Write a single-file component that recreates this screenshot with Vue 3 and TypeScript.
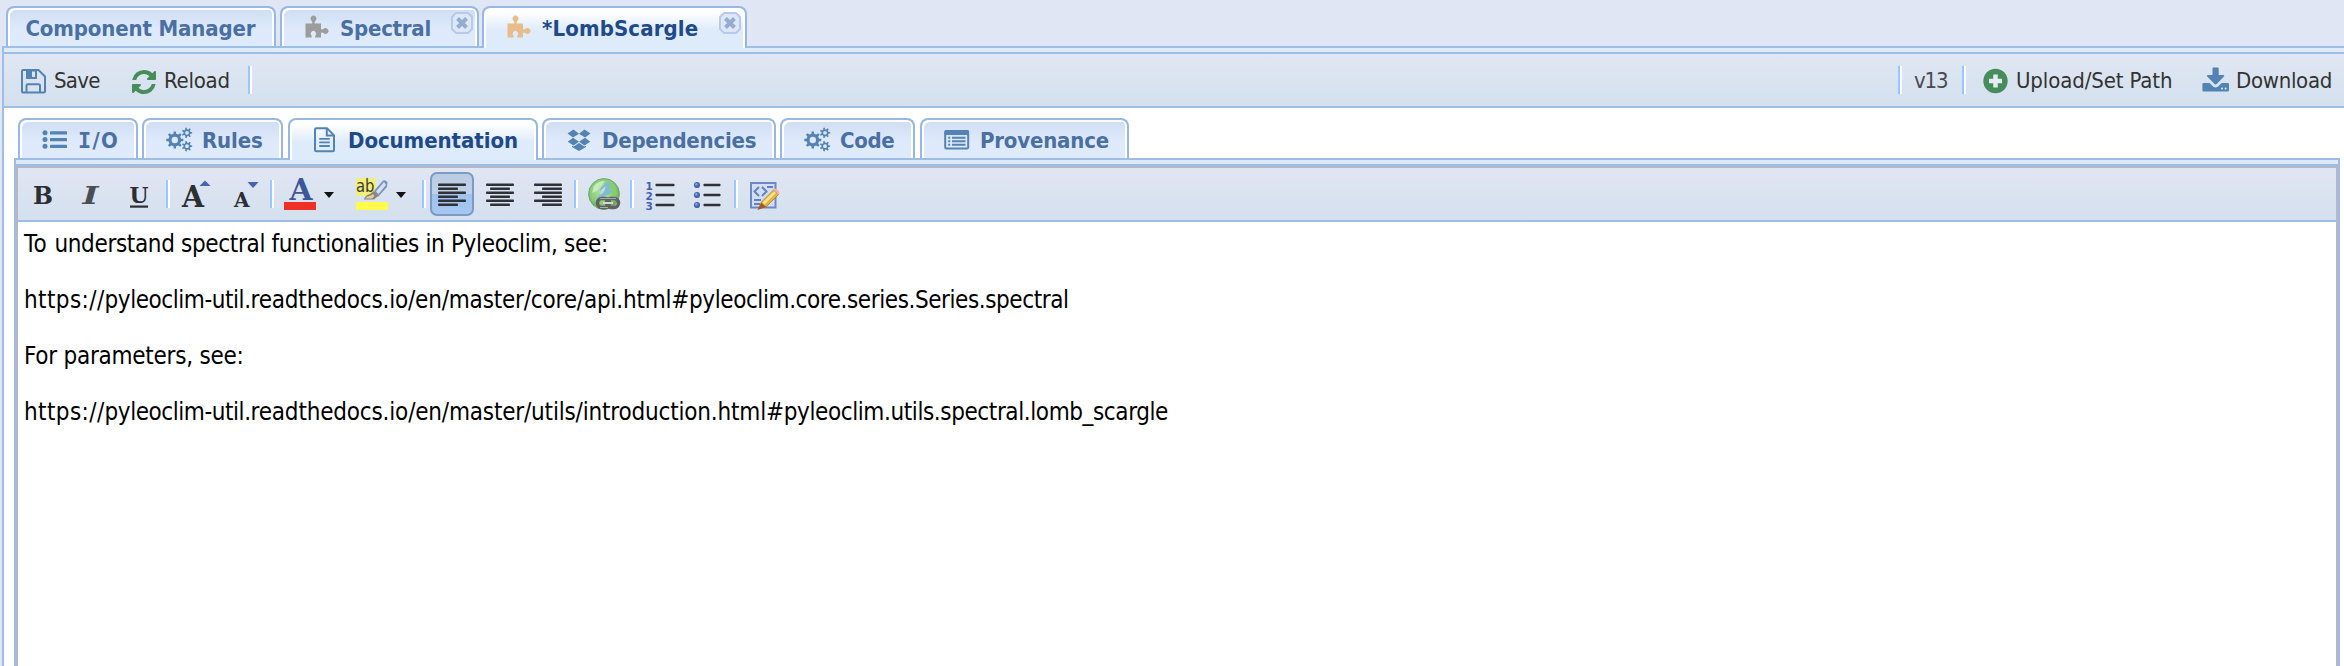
<script setup lang="ts">
type IconName = 'puzzle' | 'list' | 'cogs' | 'file' | 'dropbox' | 'listalt'

interface Tab {
  label: string
  width: number
  gap: number
  spacing: number
  icon?: IconName
  tint?: 'grey' | 'orange'
  closable?: boolean
  active?: boolean
}

const mainTabs: Tab[] = [
  { label: 'Component Manager', width: 270, gap: 4, spacing: -0.15 },
  { label: 'Spectral', width: 199, gap: 3, spacing: -0.24, icon: 'puzzle', tint: 'grey', closable: true },
  { label: '*LombScargle', width: 265, gap: 0, spacing: 0.12, icon: 'puzzle', tint: 'orange', closable: true, active: true },
]

const subTabs: Tab[] = [
  { label: 'I/O', width: 120, gap: 4, spacing: 1.2, icon: 'list' },
  { label: 'Rules', width: 141, gap: 5, spacing: -0.14, icon: 'cogs' },
  { label: 'Documentation', width: 250, gap: 4, spacing: -0.06, icon: 'file', active: true },
  { label: 'Dependencies', width: 234, gap: 4, spacing: -0.23, icon: 'dropbox' },
  { label: 'Code', width: 135, gap: 5, spacing: -0.33, icon: 'cogs' },
  { label: 'Provenance', width: 209, gap: 0, spacing: -0.2, icon: 'listalt' },
]

// Each paragraph is a run of segments with their own tracking.
const paragraphs: { text: string; spacing: number }[][] = [
  [
    { text: 'To ', spacing: 0.4 },
    { text: 'understand spectral functionalities in Pyleoclim, see:', spacing: -0.34 },
  ],
  [
    { text: 'https://', spacing: 0.4 },
    { text: 'pyleoclim-util.', spacing: -0.45 },
    { text: 'readthedocs.io/en/master/core/api.html', spacing: -0.19 },
    { text: '#pyleoclim.core.series.Series.spectral', spacing: -0.42 },
  ],
  [{ text: 'For parameters, see:', spacing: -0.25 }],
  [
    { text: 'https://', spacing: 0.4 },
    { text: 'pyleoclim-util.', spacing: -0.45 },
    { text: 'readthedocs.io/en/master/utils/introduction.html', spacing: -0.18 },
    { text: '#pyleoclim.utils.spectral.lomb_scargle', spacing: -0.4 },
  ],
]

// Outline of a gear: square teeth around a disc, with a round hole.
function gear(cx: number, cy: number, outer: number, inner: number, hole: number, teeth: number): string {
  const step = (Math.PI * 2) / teeth
  const pts: string[] = []
  for (let i = 0; i < teeth; i++) {
    const a = i * step
    const corners: [number, number][] = [[-0.27, inner], [-0.17, outer], [0.17, outer], [0.27, inner]]
    for (const [o, r] of corners) {
      pts.push(`${(cx + Math.cos(a + o * step) * r).toFixed(2)} ${(cy + Math.sin(a + o * step) * r).toFixed(2)}`)
    }
  }
  return `M${pts.join('L')}ZM${cx - hole} ${cy}a${hole} ${hole} 0 1 0 ${hole * 2} 0a${hole} ${hole} 0 1 0 ${-hole * 2} 0Z`
}

const cogs = gear(8.8, 13, 8.6, 6.4, 3.2, 8) + gear(21, 5.8, 5.2, 3.6, 1.9, 7) + gear(21, 19.2, 5.2, 3.6, 1.9, 7)

const alignRows = [0, 1, 2, 3, 4, 5]
const aligns = [
  { name: 'left', inset: 0, active: true },
  { name: 'center', inset: 4, active: false },
  { name: 'right', inset: 8, active: false },
]
</script>

<template>
  <div class="app">
    <nav class="strip main-strip">
      <div
        v-for="t in mainTabs"
        :key="t.label"
        class="tab"
        :class="{ active: t.active }"
        :style="{ width: t.width + 'px', marginRight: t.gap + 'px' }"
      >
        <svg v-if="t.icon" class="tab-icon" :class="t.tint" viewBox="0 0 28 26">
          <path d="M1.5 8.4H7.6C8.6 8.4 8.6 7 8 6.2A3 3 0 1 1 11 6.2C10.4 7 10.4 8.4 11.4 8.4H17V13.2C17 14.6 18.4 14.8 19.4 14A2.9 2.9 0 1 1 19.4 18C18.4 17.2 17 17.4 17 18.8V22.6H11.8C10.8 22.6 10.9 21.2 11.5 20.4A2.7 2.7 0 1 0 7.3 20.4C7.9 21.2 8 22.6 7 22.6H1.5Z" />
        </svg>
        <span class="tab-label" :style="{ letterSpacing: t.spacing + 'px' }">{{ t.label }}</span>
        <svg v-if="t.closable" class="close" viewBox="0 0 22 22">
          <path class="close-box" d="M5 1H17L21 5V17L17 21H5L1 17V5Z" />
          <path class="close-x" d="M6.5 6.5L15.5 15.5M15.5 6.5L6.5 15.5" />
        </svg>
      </div>
    </nav>

    <div class="window">
      <div class="band"></div>
      <div class="toolbar">
        <div class="btn save">
          <svg viewBox="0 0 26 26" class="ic26">
            <path class="line" d="M3 2H18.5L25 8.5V23Q25 24.5 23.5 24.5H3Q2 24.5 2 23.5V3Q2 2 3 2Z" />
            <path class="line" d="M6.5 24V17.5Q6.5 16.2 7.8 16.2H18.7Q20 16.2 20 17.5V24" />
            <path class="solid" fill-rule="evenodd" d="M6 2H17V11H6ZM12 3.5V9H15V3.5Z" />
          </svg>
          <span class="t-save">Save</span>
        </div>
        <div class="btn reload">
          <svg viewBox="0 0 1536 1536" class="ic24 green">
            <path d="M1511 928q0 5-1 7-64 268-268 434.500t-478 166.500q-146 0-282.500-55t-243.500-157l-129 129q-19 19-45 19t-45-19-19-45v-448q0-26 19-45t45-19h448q26 0 45 19t19 45-19 45l-137 137q71 66 161 102t187 36q134 0 250-65t186-179q11-17 53-117 8-23 30-23h192q13 0 22.500 9.500t9.500 22.500zm25-800v448q0 26-19 45t-45 19h-448q-26 0-45-19t-19-45 19-45l138-138q-148-137-349-137-134 0-250 65t-186 179q-11 17-53 117-8 23-30 23h-199q-13 0-22.500-9.500t-9.500-22.500v-7q65-268 270-434.500t480-166.500q146 0 284 55.500t245 156.500l130-129q19-19 45-19t45 19 19 45z" />
          </svg>
          <span class="t-reload">Reload</span>
        </div>
        <i class="sep"></i>
        <span class="spacer"></span>
        <i class="sep"></i>
        <span class="version">v13</span>
        <i class="sep"></i>
        <div class="btn upload">
          <svg viewBox="0 0 26 26" class="ic26">
            <circle class="green" cx="13.500" cy="14" r="12.200" />
            <path class="plus" d="M13.500 7.500V20.500M7 14H20" />
          </svg>
          <span class="t-upload">Upload/Set Path</span>
        </div>
        <div class="btn download">
          <svg viewBox="0 0 28 26" class="ic28">
            <path class="solid" d="M10.500 1.500Q10.500 .5 11.500 .5H15.700Q16.700 .5 16.700 1.500V8H21.500Q22.900 8.200 22 9.400L14.400 17.200Q13.600 17.900 12.800 17.200L5.200 9.400Q4.300 8.200 5.700 8H10.500Z" />
            <path class="solid" d="M1.500 16H7.500L11.400 19.700Q13.600 21.300 15.800 19.700L19.700 16H25.700Q27 16 27 17.300V23.200Q27 24.500 25.700 24.500H1.800Q.4 24.500 .4 23.200V17.300Q.4 16 1.500 16Z" />
            <circle class="dot" cx="20" cy="21.500" r="1" />
            <circle class="dot" cx="23.600" cy="21.500" r="1" />
          </svg>
          <span class="t-download">Download</span>
        </div>
      </div>

      <div class="body">
        <nav class="strip sub-strip">
          <div
            v-for="t in subTabs"
            :key="t.label"
            class="tab"
            :class="{ active: t.active }"
            :style="{ width: t.width + 'px', marginRight: t.gap + 'px' }"
          >
            <svg class="tab-icon blue" viewBox="0 0 28 26">
              <template v-if="t.icon === 'list'">
                <circle v-for="y in [5.800, 12.500, 19.200]" :key="'c' + y" cx="3" :cy="y" r="2.500" />
                <rect v-for="y in [4.300, 11, 17.700]" :key="'r' + y" x="8" :y="y" width="17" height="3.200" rx=".5" />
              </template>
              <path v-else-if="t.icon === 'cogs'" fill-rule="evenodd" :d="cogs" />
              <template v-else-if="t.icon === 'file'">
                <path class="outline" d="M4.500 1.300H15L22 8.300V23Q22 24.200 20.800 24.200H4.200Q3 24.200 3 23V2.500Q3 1.300 4.500 1.300Z" />
                <path class="outline" d="M14.800 1.300V8.500H22" />
                <path class="outline thin" d="M7.300 11.800H17.800M7.300 15.400H17.800M7.300 19H17.800" />
              </template>
              <path
                v-else-if="t.icon === 'dropbox'"
                d="M7.500 2.500L13 6.700L7 10.500L1.500 6.500ZM18.500 2.500L13 6.700L19 10.500L24.500 6.500ZM7 10.700L13 14.800L7.600 18.500L1.700 14.700ZM19 10.700L13 14.800L18.400 18.500L24.300 14.700ZM13 16L7.700 19.600L6 18.700V20L13 24L20 20V18.700L18.300 19.600Z"
              />
              <template v-else-if="t.icon === 'listalt'">
                <rect class="outline" x="1.200" y="4" width="23" height="17.500" rx="1.500" />
                <path d="M.5 4.500Q.5 3 2 3H23.500Q25 3 25 4.500V8H.5Z" />
                <path class="outline" d="M4.200 10.700H6.200M8 10.700H21.500M4.200 14.200H6.200M8 14.200H21.500M4.200 17.700H6.200M8 17.700H21.500" />
              </template>
            </svg>
            <span class="tab-label" :style="{ letterSpacing: t.spacing + 'px' }">
              <template v-if="t.label === 'I/O'"><span class="slab">I</span>/O</template>
              <template v-else>{{ t.label }}</template>
            </span>
          </div>
        </nav>

        <section class="panel">
          <div class="band sub-band"></div>
          <div class="editor">
            <div class="edit-bar">
              <div class="eb"><svg viewBox="0 0 32 32"><text class="glyph" x="5" y="26" font-size="24" textLength="20" lengthAdjust="spacingAndGlyphs">B</text></svg></div>
              <div class="eb"><svg viewBox="0 0 32 32"><text class="glyph slant" x="6.500" y="26" font-size="24" font-style="italic" textLength="16" lengthAdjust="spacingAndGlyphs">I</text></svg></div>
              <div class="eb">
                <svg viewBox="0 0 32 32">
                  <text class="glyph" x="5.500" y="25" font-size="23" textLength="19" lengthAdjust="spacingAndGlyphs">U</text>
                  <rect x="6" y="27.500" width="18" height="2.200" fill="#2b2f33" />
                </svg>
              </div>
              <i class="sep"></i>
              <div class="eb">
                <svg viewBox="0 0 32 32">
                  <text class="glyph" x="2" y="29" font-size="30" textLength="22" lengthAdjust="spacingAndGlyphs">A</text>
                  <path fill="#4762ae" d="M19.500 8L25 2.500L30.500 8Z" />
                </svg>
              </div>
              <div class="eb">
                <svg viewBox="0 0 32 32">
                  <text class="glyph" x="6" y="29" font-size="21" textLength="15.500" lengthAdjust="spacingAndGlyphs">A</text>
                  <path fill="#4762ae" d="M19.500 4H30.500L25 10Z" />
                </svg>
              </div>
              <i class="sep"></i>
              <div class="eb wide">
                <svg viewBox="0 0 32 32">
                  <text class="glyph blue-a" x="5.500" y="22" font-size="29" textLength="23" lengthAdjust="spacingAndGlyphs">A</text>
                  <rect y="24" width="32" height="8" fill="#ee3124" />
                </svg>
                <b class="caret"></b>
              </div>
              <div class="eb wide">
                <svg viewBox="0 0 32 32">
                  <rect width="20" height="18" fill="#f1ee7c" />
                  <text class="ab" x="0" y="14" font-size="18" textLength="18.500" lengthAdjust="spacingAndGlyphs">ab</text>
                  <path fill="#7b93bd" d="M18 13L27 2.500Q30 1.500 31.500 4.500L31 9L22 19Z" />
                  <path fill="#d4e0f0" d="M20 13.500L28 4L30 7L22.500 16Z" />
                  <path fill="#8c8376" d="M8 21.500Q9 17 14 16L18 13L22 18L18 21.500Z" />
                  <path fill="#e6cf9c" d="M9 20.500Q11 18 15 17.500L17 16L18.500 18L16 20.500Z" />
                  <rect y="24" width="32" height="8" fill="#fffb4d" />
                </svg>
                <b class="caret"></b>
              </div>
              <i class="sep"></i>
              <div v-for="a in aligns" :key="a.name" class="eb" :class="{ pressed: a.active }">
                <svg viewBox="0 0 32 32">
                  <rect
                    v-for="r in alignRows"
                    :key="r"
                    :x="2 + (r % 2 ? a.inset : 0)"
                    :y="5.500 + r * 4"
                    :width="r % 2 ? 20 : 28"
                    height="2.500"
                    rx=".8"
                    fill="#2e3135"
                  />
                </svg>
              </div>
              <i class="sep"></i>
              <div class="eb">
                <svg viewBox="0 0 32 32">
                  <defs>
                    <radialGradient id="globe" cx=".45" cy=".4" r=".6">
                      <stop offset="0" stop-color="#b4e4ad" />
                      <stop offset=".7" stop-color="#86c978" />
                      <stop offset="1" stop-color="#62a458" />
                    </radialGradient>
                  </defs>
                  <circle cx="16" cy="16" r="15.400" fill="url(#globe)" stroke="#6fa866" />
                  <path fill="#7fbbd4" d="M9 20L13 15L12 11L19 4L24 6L21 10L25 14L19 17L14 19L11 24Z" />
                  <path fill="#c6ecb8" d="M6 8Q10 3 17 3L13 8L9 13L4 15Z" />
                  <path fill="#86cd6c" d="M22 5Q29 10 29.500 17L23 17L25 13L21 10Z" />
                  <path fill="#d9efdc" d="M13 12L18 8L16 14L12 17Z" opacity=".7" />
                  <rect x="9.500" y="20.500" width="12" height="9" rx="4.500" fill="none" stroke="#60625f" stroke-width="3.500" />
                  <rect x="18.500" y="20.500" width="12" height="9" rx="4.500" fill="none" stroke="#60625f" stroke-width="3.500" />
                  <path stroke="#a9aba9" stroke-width="1.200" fill="none" d="M12 20.500H28M12 29.500H20" />
                  <path stroke="#d7d8d6" stroke-width="2" d="M15 25H25" />
                </svg>
              </div>
              <i class="sep"></i>
              <div class="eb">
                <svg viewBox="0 0 32 32">
                  <g class="num">
                    <text x="1.500" y="11.500">1</text>
                    <text x="1.500" y="21.500">2</text>
                    <text x="1.500" y="31.500">3</text>
                  </g>
                  <rect v-for="y in [5.700, 15.700, 25.700]" :key="y" x="11.500" :y="y" width="19" height="2.600" rx=".8" fill="#2e3135" />
                </svg>
              </div>
              <div class="eb">
                <svg viewBox="0 0 32 32">
                  <template v-for="y in [7, 17, 27]" :key="y">
                    <circle cx="5" :cy="y" r="3.100" fill="#4a66b0" />
                    <circle cx="4.300" :cy="y - 0.700" r="1.200" fill="#8ba2dc" />
                    <rect x="11.500" :y="y - 1.300" width="17" height="2.600" rx=".8" fill="#2e3135" />
                  </template>
                </svg>
              </div>
              <i class="sep"></i>
              <div class="eb">
                <svg viewBox="0 0 32 32">
                  <rect x="3" y="5" width="24.500" height="24.500" fill="#d3def4" stroke="#6d87c6" stroke-width="2" />
                  <path fill="none" stroke="#6480c4" stroke-width="2" d="M11 9L6.500 13.500L11 18M14 9L18.500 13.500L14 18M19 9H25M6 22H13M6 26H12" />
                  <path fill="#e8b13c" stroke="#b98a3c" d="M13 24.500L25.500 12L30.500 16.500L18 29Z" />
                  <path fill="#fbe48c" d="M14.500 24.500L26 13.200L28 15L16.500 26.500Z" />
                  <path fill="#efb3a0" d="M25.500 12L27 10.500Q29 10.500 31.500 14.500L30.500 16.500Z" />
                  <path fill="#a35a22" d="M13 24.500L18 29L9.500 32Z" />
                </svg>
              </div>
            </div>
            <article class="content">
              <p v-for="(p, i) in paragraphs" :key="i"><span v-for="s in p" :key="s.text" :style="{ letterSpacing: s.spacing + 'px' }">{{ s.text }}</span></p>
            </article>
          </div>
        </section>
      </div>
    </div>
  </div>
</template>

<style>
body {
  overflow: hidden;
}
</style>

<style scoped>
.app {
  box-sizing: border-box;
  height: 666px;
  padding-left: 2px;
  display: flex;
  flex-direction: column;
  overflow: hidden;
  background: #e0e6f4;
  font-family: 'DejaVu Sans Condensed', 'DejaVu Sans', sans-serif;
  font-size: 22px;
  line-height: 26px;
  color: #333;
}
.app *,
.app *::before {
  box-sizing: border-box;
}
svg {
  display: block;
  flex: none;
  overflow: visible;
}
.strip {
  flex: none;
  display: flex;
  align-items: flex-start;
  padding-left: 4px;
}
.main-strip {
  height: 46px;
  padding-top: 6px;
}
.sub-strip {
  height: 50px;
  padding-top: 10px;
}
.tab {
  position: relative;
  flex: none;
  height: 40px;
  padding: 2px 0 0 17.5px;
  display: flex;
  align-items: center;
  gap: 8px;
  border: 2px solid #97b7e4;
  border-bottom: 0;
  border-radius: 8px 8px 0 0;
  background: linear-gradient(#cfddf2, #deeafb 55%, #deebfb);
  box-shadow: inset 2px 2px 0 #fff, inset -2px 0 0 #fff;
  color: #4a6fa3;
  font-weight: bold;
}
.tab:has(.tab-icon) {
  padding-left: 22px;
}
.tab.active {
  z-index: 1;
  height: 42px;
  padding-bottom: 2px;
  background: linear-gradient(#fff 10%, #deebfb 55%);
  color: #20498a;
}
.tab-icon {
  width: 28px;
  height: 26px;
  margin-top: -1px;
}
.tab-label {
  padding-top: 1.5px;
  white-space: nowrap;
}
.slab {
  font-family: 'DejaVu Sans Mono', monospace;
}
.grey {
  fill: #9c9c9c;
}
.orange {
  fill: #e8bc8b;
}
.blue {
  fill: #5283b3;
}
.green {
  fill: #478d5b;
}
.outline {
  fill: none;
  stroke: #5283b3;
  stroke-width: 2;
}
.thin {
  stroke-width: 1.8;
}
.close {
  position: absolute;
  top: 4px;
  right: 4px;
  width: 22px;
  height: 22px;
}
.close-box {
  fill: #dce8f8;
  stroke: #b6cbea;
  stroke-width: 2;
  stroke-linejoin: round;
}
.close-x {
  fill: none;
  stroke: #95abd1;
  stroke-width: 4;
}
.window {
  flex: 1;
  min-height: 0;
  display: flex;
  flex-direction: column;
  border-left: 2px solid #9fbee7;
  border-top: 2px solid #9fbee7;
  background: #fff;
}
.band {
  flex: none;
  height: 6px;
  background: #deebfb;
  border-bottom: 2px solid #9fbee7;
}
.toolbar {
  flex: none;
  height: 54px;
  display: flex;
  align-items: center;
  padding: 0 0 0 16px;
  border-bottom: 2px solid #9fbee7;
  background: linear-gradient(#e0e7f3, #d4e0ee);
}
.btn {
  flex: none;
  display: flex;
  align-items: center;
  gap: 8px;
  white-space: nowrap;
}
.btn span,
.version {
  padding-top: 1.5px;
}
.ic26 {
  width: 26px;
  height: 26px;
}
.ic24 {
  width: 24px;
  height: 24px;
}
.ic28 {
  width: 28px;
  height: 26px;
}
.line {
  fill: none;
  stroke: #5283b3;
  stroke-width: 2;
}
.solid {
  fill: #5283b3;
}
.plus {
  fill: none;
  stroke: #e4eef2;
  stroke-width: 4.5;
}
.dot {
  fill: #e4ecf5;
}
.save {
  width: 111px;
}
.reload {
  width: 117px;
}
.ic24 {
  margin: 4px 0 0 1px;
}
.save svg {
  margin-top: 2px;
}
.t-save {
  letter-spacing: -0.7px;
}
.t-reload {
  letter-spacing: -0.24px;
}
.t-upload {
  letter-spacing: -0.12px;
}
.t-download {
  letter-spacing: -0.3px;
}
.upload {
  width: 220px;
  margin-left: 16px;
}
.download {
  width: 142px;
  gap: 6px;
}
.spacer {
  flex: 1;
}
.sep {
  flex: none;
  width: 4px;
  height: 28px;
  background: linear-gradient(90deg, #98c8ff 50%, #fff 50%);
}
.version {
  width: 60px;
  padding-left: 12px;
  letter-spacing: -1.2px;
  color: #4a4a4a;
}
.body {
  flex: 1;
  min-height: 0;
  display: flex;
  flex-direction: column;
  padding: 0 4px 0 10px;
}
.panel {
  flex: 1;
  min-height: 0;
  display: flex;
  flex-direction: column;
  border: 2px solid #9fbbe6;
  border-bottom: 0;
}
.sub-band {
  background: #dbe9fa;
  border-color: #9fbbe6;
}
.editor {
  flex: 1;
  min-height: 0;
  border: 2px solid #b3b7c8;
  border-bottom: 0;
}
.edit-bar {
  height: 54px;
  display: flex;
  align-items: center;
  gap: 4px;
  padding-left: 4px;
  border-bottom: 2px solid #9fbee7;
  background: linear-gradient(#e1e6f3, #d4e0ee);
}
.eb {
  flex: none;
  width: 44px;
  height: 44px;
  padding: 6px;
  display: flex;
  align-items: center;
}
.eb svg {
  width: 32px;
  height: 32px;
}
.wide {
  width: 68px;
}
.pressed {
  padding: 4px;
  border: 2px solid #7d9ac4;
  border-radius: 7px;
  background: linear-gradient(#b9cce2, #c0d2e7 50%, #9fc2ef 50%, #a6c7f1);
}
.caret {
  margin: 1px 0 0 7.5px;
  border: 5.5px solid transparent;
  border-top: 6px solid #111;
  border-bottom: 0;
}
.glyph {
  font-family: 'DejaVu Serif', serif;
  font-weight: bold;
  fill: #2b2f33;
}
.slant {
  fill: #4a4e52;
}
.blue-a {
  fill: #3d5898;
}
.ab {
  font-family: 'DejaVu Sans Condensed', sans-serif;
  fill: #3c3c30;
}
.num {
  font-family: 'DejaVu Sans', sans-serif;
  font-weight: bold;
  font-size: 10.5px;
  fill: #4261b5;
}
.content {
  padding: 8px 6px 0;
  font-size: 24px;
  line-height: 28px;
  color: #000;
}
.content p {
  margin: 0 0 28px;
  white-space: pre;
}
</style>
